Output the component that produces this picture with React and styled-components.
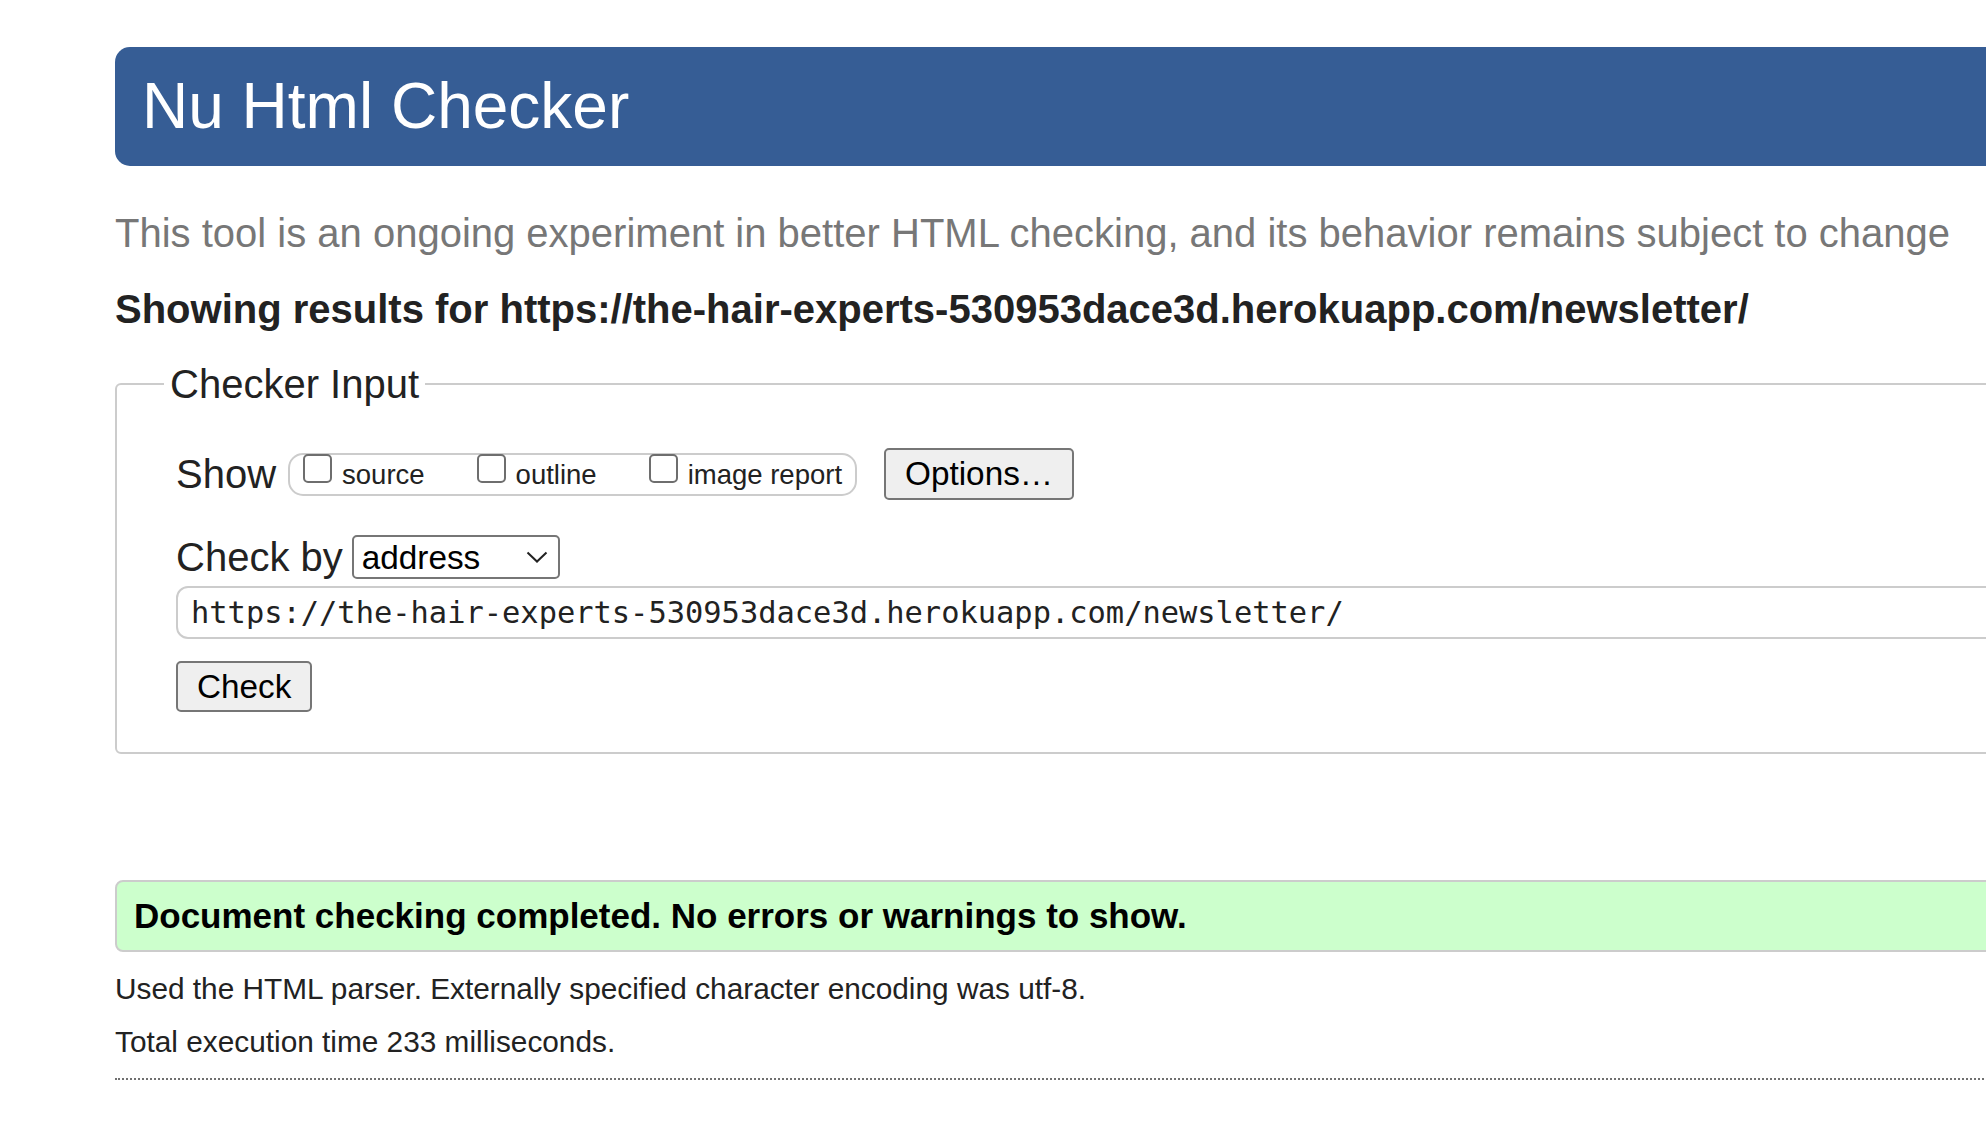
import React from "react";
import styled, { createGlobalStyle } from "styled-components";

const GlobalStyle = createGlobalStyle`
  html, body {
    margin: 0;
    padding: 0;
    background: #fff;
    overflow: hidden;
  }
  body {
    font-family: "Liberation Sans", Arial, sans-serif;
    color: #222;
  }
`;

const Page = styled.div`
  width: 2400px;
  padding: 47px 0 40px 115px;
  box-sizing: border-box;
`;

const Header = styled.h1`
  margin: 0;
  height: 119px;
  padding-left: 27px;
  background: #365d95;
  border-radius: 15px;
  color: #fff;
  font-size: 64px;
  font-weight: 400;
  line-height: 119px;
`;

const Tagline = styled.p`
  margin: 44px 0 0;
  color: #777;
  font-size: 40px;
  line-height: 46px;
`;

const Results = styled.h2`
  margin: 30px 0 0;
  font-size: 40px;
  font-weight: 700;
  line-height: 46px;
  color: #222;
`;

const Fieldset = styled.fieldset`
  margin: 29px 0 0;
  padding: 41px 0 40px 59px;
  border: 2px solid #ccc;
  border-radius: 6px;
`;

const Legend = styled.legend`
  margin-left: -12px;
  padding: 0 6px;
  font-size: 40px;
  line-height: 46px;
  color: #222;
`;

const Row = styled.div`
  display: flex;
  align-items: center;
  height: ${(p) => p.$h}px;
  margin-bottom: ${(p) => p.$gap || 0}px;
`;

const RowLabel = styled.span`
  font-size: 40px;
  line-height: 46px;
  margin-right: ${(p) => p.$gap}px;
`;

const ShowGroup = styled.div`
  display: flex;
  align-items: flex-start;
  gap: 52px;
  height: 43px;
  box-sizing: border-box;
  padding: 0 13px;
  border: 2px solid #ccc;
  border-radius: 15px;
  margin-right: 27px;
  align-self: center;
`;

const CheckLabel = styled.label`
  display: flex;
  align-items: flex-start;
  gap: 10px;
`;

const Box = styled.input.attrs({ type: "checkbox" })`
  appearance: none;
  margin: -1px 0 0;
  width: 29px;
  height: 29px;
  box-sizing: border-box;
  border: 2.5px solid #6e6e6e;
  border-radius: 5px;
  background: #fff;
`;

const CheckText = styled.span`
  font-size: 27.5px;
  line-height: 31px;
  margin-top: 4px;
  color: #222;
`;

const Button = styled.button`
  height: ${(p) => p.$h}px;
  padding: 0 ${(p) => p.$px}px;
  box-sizing: border-box;
  border: 2px solid #767676;
  border-radius: 5px;
  background: #efefef;
  font-family: "Liberation Sans", Arial, sans-serif;
  font-size: 33.3px;
  color: #000;
`;

const SelectWrap = styled.div`
  position: relative;
  width: 208px;
  height: 44px;
`;

const Select = styled.select`
  appearance: none;
  width: 100%;
  height: 100%;
  box-sizing: border-box;
  margin: 0;
  padding: 0 0 0 8px;
  border: 2px solid #767676;
  border-radius: 5px;
  background: #fff;
  font-family: "Liberation Sans", Arial, sans-serif;
  font-size: 33.3px;
  color: #000;
`;

const Chevron = styled.svg`
  position: absolute;
  right: 12px;
  top: 16px;
  pointer-events: none;
`;

const UrlInput = styled.input`
  display: block;
  width: 100%;
  height: 53px;
  box-sizing: border-box;
  margin: 0 0 22px;
  padding: 0 13px;
  border: 2px solid #ccc;
  border-radius: 12px;
  font-family: "DejaVu Sans Mono", "Liberation Mono", monospace;
  font-size: 30.4px;
  color: #222;
`;

const Success = styled.div`
  margin-top: 126px;
  height: 72px;
  box-sizing: border-box;
  padding-left: 17px;
  display: flex;
  align-items: center;
  background: #ccffcc;
  border: 2px solid #ccc;
  border-radius: 8px;
  font-size: 35px;
  font-weight: 700;
  color: #000;
`;

const Note = styled.p`
  margin: ${(p) => p.$top}px 0 0;
  font-size: 29.8px;
  line-height: 34.5px;
  color: #222;
`;

const Dotted = styled.hr`
  margin: 18px 0 0;
  border: 0;
  border-top: 2px dotted #707070;
  height: 0;
`;

export default function App() {
  return (
    <Page>
      <GlobalStyle />
      <Header>Nu Html Checker</Header>
      <Tagline>
        This tool is an ongoing experiment in better HTML checking, and its behavior remains subject to change
      </Tagline>
      <Results>Showing results for https://the-hair-experts-530953dace3d.herokuapp.com/newsletter/</Results>
      <Fieldset>
        <Legend>Checker Input</Legend>
        <Row $h={52} $gap={35}>
          <RowLabel $gap={12}>Show</RowLabel>
          <ShowGroup>
            <CheckLabel>
              <Box />
              <CheckText>source</CheckText>
            </CheckLabel>
            <CheckLabel>
              <Box />
              <CheckText>outline</CheckText>
            </CheckLabel>
            <CheckLabel>
              <Box />
              <CheckText>image report</CheckText>
            </CheckLabel>
          </ShowGroup>
          <Button type="button" $h={52} $px={19}>Options…</Button>
        </Row>
        <Row $h={44} $gap={7}>
          <RowLabel $gap={9}>Check by</RowLabel>
          <SelectWrap>
            <Select defaultValue="address">
              <option value="address">address</option>
              <option value="file">file upload</option>
              <option value="text">text input</option>
            </Select>
            <Chevron width="22" height="12" viewBox="0 0 22 12">
              <path d="M1.5 1.5 L11 10.5 L20.5 1.5" fill="none" stroke="#222" strokeWidth="2" />
            </Chevron>
          </SelectWrap>
        </Row>
        <UrlInput
          type="url"
          defaultValue="https://the-hair-experts-530953dace3d.herokuapp.com/newsletter/"
        />
        <Button type="button" $h={51} $px={19}>Check</Button>
      </Fieldset>
      <Success>Document checking completed. No errors or warnings to show.</Success>
      <Note $top={20}>Used the HTML parser. Externally specified character encoding was utf-8.</Note>
      <Note $top={18.5}>Total execution time 233 milliseconds.</Note>
      <Dotted />
    </Page>
  );
}
